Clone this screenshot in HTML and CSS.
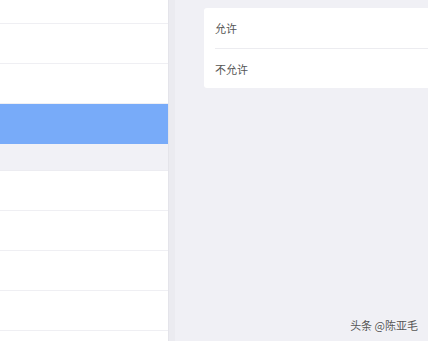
FILE: index.html
```html
<!DOCTYPE html>
<html lang="zh">
<head>
<meta charset="utf-8">
<link rel="stylesheet" href="styles.css">
</head>
<body>
<div class="app">
  <div class="left">
    <div class="row row-top"></div>
    <div class="row"></div>
    <div class="row"></div>
    <div class="row row-selected"></div>
    <div class="section-gap"></div>
    <div class="row"></div>
    <div class="row"></div>
    <div class="row"></div>
    <div class="row"></div>
    <div class="row"></div>
  </div>
  <div class="split"></div>
  <div class="right">
    <div class="card">
      <div class="option">允许</div>
      <div class="option">不允许</div>
    </div>
    <div class="spacer"></div>
    <div class="watermark">头条 @陈亚毛</div>
  </div>
</div>
</body>
</html>
```
FILE: styles.css
```css
html, body {
  margin: 0;
  padding: 0;
  height: 100%;
  overflow: hidden;
}
body {
  font-family: "Noto Sans CJK SC", "Noto Sans", sans-serif;
  background: #f0f0f5;
}
.app {
  display: flex;
  height: 341px;
  width: 428px;
}
.left {
  width: 168px;
  flex: none;
  display: flex;
  flex-direction: column;
  background: #ffffff;
  overflow: hidden;
}
.row {
  flex: none;
  height: 39px;
  border-bottom: 1px solid #efeff3;
  background: #ffffff;
}
.row-top {
  height: 23px;
}
.row-selected {
  height: 40px;
  border-bottom: none;
  background: #78abf9;
}
.section-gap {
  flex: none;
  height: 26px;
  background: #f1f1f6;
  border-bottom: 1px solid #ececf1;
}
.split {
  flex: none;
  width: 6px;
  background: #ebebf0;
  border-left: 1px solid #e4e4ea;
}
.right {
  flex: 1;
  display: flex;
  flex-direction: column;
  padding-top: 8px;
  padding-left: 29px;
  min-width: 0;
}
.card {
  background: #ffffff;
  border-radius: 3px 0 0 3px;
  padding-left: 11px;
  display: flex;
  flex-direction: column;
}
.option {
  height: 40px;
  display: flex;
  align-items: center;
  font-size: 11px;
  color: #555555;
}
.option + .option {
  border-top: 1px solid #ececf0;
  height: 39px;
}
.spacer {
  flex: 1;
}
.watermark {
  align-self: flex-end;
  margin-right: 10px;
  margin-bottom: 8px;
  font-size: 11px;
  color: #555555;
  text-shadow: 0 0 2px #ffffff;
}
```
